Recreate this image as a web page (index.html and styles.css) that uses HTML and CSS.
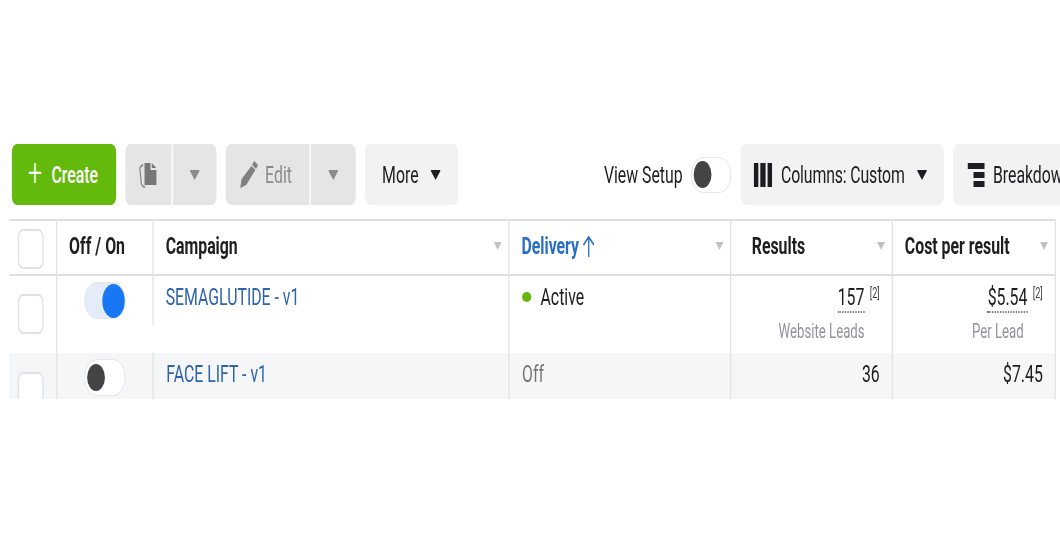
FILE: index.html

```html
<!DOCTYPE html>
<html lang="en">
<head>
  <meta charset="UTF-8">
  <title>Campaigns</title>
  <link rel="stylesheet" href="styles.css">
</head>
<body>

<div class="page">
  <div class="toolbar">
    <button class="btn create"><span class="plus">+</span> Create</button>
    <div class="group">
      <button class="btn off copy">
        <svg width="30" height="26" viewBox="0 0 30 26"><path d="M7 3 C3 4 2 5 2 7 L4 21 C5 24 7 25 10 25" fill="none" stroke="#8c8c8c" stroke-width="2"/><path d="M9 1 H18 V8 H27 V23 H9 Z M20 1 L27 6 H20 Z" fill="#777"/></svg>
      </button>
      <button class="btn off caret"><i class="arrow grey"></i></button>
    </div>
    <div class="group">
      <button class="btn off edit">
        <svg width="28" height="27" viewBox="0 0 28 27"><path d="M22 0 L28 4 L25 8 L19 4 Z M18 5 L24 9 L10 24 L1 27 L3 18 Z" fill="#808080"/></svg>
        Edit
      </button>
      <button class="btn off caret wide"><i class="arrow grey"></i></button>
    </div>
    <button class="btn more">More <i class="arrow"></i></button>
    <div class="view-setup">
      <span>View Setup</span>
      <span class="toggle"><i class="knob"></i></span>
    </div>
    <button class="btn columns">
      <svg width="28" height="24" viewBox="0 0 28 24"><path d="M0 0 H7 V24 H0 Z M10 0 H18 V24 H10 Z M21 0 H28 V24 H21 Z" fill="#1c1e21"/></svg>
      <span class="col-label">Columns: Custom</span> <i class="arrow"></i>
    </button>
    <button class="btn breakdown">
      <svg width="26" height="24" viewBox="0 0 26 24"><path d="M0 0 H26 V6 H0 Z M9 9 H26 V15 H9 Z M9 18 H26 V24 H9 Z" fill="#1c1e21"/></svg>
      Breakdown
    </button>
  </div>

  <div class="table-clip">
    <table class="campaigns">
      <colgroup>
        <col class="c-check"><col class="c-toggle"><col class="c-name"><col class="c-delivery"><col class="c-results"><col class="c-cost">
      </colgroup>
      <thead>
        <tr>
          <th><span class="check"></span></th>
          <th>Off / On</th>
          <th><div class="th-in">Campaign <i class="sort"></i></div></th>
          <th><div class="th-in"><span class="sorted">Delivery <svg class="up" width="18" height="22" viewBox="0 0 18 22"><path d="M9 22 V2 M1 10 L9 2 L17 10" fill="none" stroke="#2a6fc4" stroke-width="2"/></svg></span> <i class="sort"></i></div></th>
          <th class="th-results"><div class="th-in">Results <i class="sort"></i></div></th>
          <th><div class="th-in">Cost per result <i class="sort"></i></div></th>
        </tr>
      </thead>
      <tbody>
        <tr class="row-one">
          <td class="check-cell"><span class="check"></span></td>
          <td class="toggle-cell"><div class="toggle-in short"><span class="toggle on"><i class="knob"></i></span></div></td>
          <td><a class="link" href="#">SEMAGLUTIDE - v1</a></td>
          <td><span class="dot"></span>Active</td>
          <td class="num"><span class="dotted">157</span><sup>[2]</sup><div class="sub">Website Leads</div></td>
          <td class="num"><span class="dotted">$5.54</span><sup>[2]</sup><div class="sub">Per Lead</div></td>
        </tr>
        <tr class="row-two">
          <td class="check-cell"><span class="check"></span></td>
          <td class="toggle-cell"><div class="toggle-in"><span class="toggle"><i class="knob"></i></span></div></td>
          <td><a class="link" href="#">FACE LIFT - v1</a></td>
          <td class="muted">Off</td>
          <td class="num">36</td>
          <td class="num">$7.45</td>
        </tr>
      </tbody>
    </table>
  </div>
</div>

</body>
</html>
```

FILE: styles.css

```css
html, body { margin: 0; padding: 0; background: #fff; overflow: hidden; height: 100%; }
body { font-family: Roboto, "Liberation Sans", sans-serif; font-size: 24px; color: #1c1e21; }

/* the whole shot is squeezed sideways, so lay out wide and scale it */
.page { width: 1606px; padding-top: 144px; transform: scaleX(0.66); transform-origin: 0 0; filter: blur(0.6px); }

.toolbar { display: flex; align-items: center; gap: 14px; padding-left: 18px; height: 61px; white-space: nowrap; overflow: hidden; }
.btn { display: flex; align-items: center; justify-content: center; flex: none; height: 61px; padding: 0; border: 0; border-radius: 8px; background: #f2f2f2; font: inherit; color: #1c1e21; }
.create { width: 158px; gap: 14px; padding-right: 3px; background: #63b90c; color: #fff; font-weight: 500; }
.plus { font-size: 38px; font-weight: 300; line-height: 1; margin-top: -4px; }
.group { display: flex; gap: 2px; flex: none; }
.off { background: #e5e5e5; color: #8a8a8a; }
.group .btn:first-child { border-radius: 8px 0 0 8px; }
.group .btn:last-child { border-radius: 0 8px 8px 0; }
.copy { width: 70px; }
.caret { width: 66px; }
.caret.wide { width: 68px; }
.edit { width: 127px; gap: 11px; padding-right: 6px; }
.more { width: 141px; gap: 18px; }
.columns { width: 308px; gap: 13px; justify-content: flex-start; padding-left: 20px; }
.col-label { margin-right: 5px; letter-spacing: -0.2px; }
.breakdown { width: 300px; gap: 12px; justify-content: flex-start; padding-left: 22px; }

.arrow { display: inline-block; border: 8px solid transparent; border-top: 10px solid #1c1e21; border-bottom: 0; border-radius: 2px; }
.arrow.grey { border-top-color: #8a8a8a; }

.view-setup { display: flex; align-items: center; gap: 13px; margin-left: 207px; flex: none; }

.toggle { display: inline-flex; align-items: center; box-sizing: border-box; width: 61px; height: 36px; padding: 0 3px; border: 1px solid #dfe1e4; border-radius: 18px; background: #fff; }
.knob { display: block; width: 27px; height: 27px; border-radius: 50%; background: #444; }
.toggle.on { justify-content: flex-end; background: #e4ecf9; }
.toggle.on .knob { width: 34px; height: 34px; background: #1877f2; margin-right: -3px; }

.table-clip { margin: 14px 0 0 14px; height: 180px; overflow: hidden; }
.campaigns { width: 1585px; table-layout: fixed; border-collapse: collapse; }
.c-check { width: 72px; }
.c-toggle { width: 146px; }
.c-name { width: 539px; }
.c-delivery { width: 336px; }
.c-results { width: 245px; }
.c-cost { width: 247px; }

th, td { border-left: 2px solid #e2e3e5; padding: 0 18px 0 19px; vertical-align: top; text-align: left; }
th:last-child, td:last-child { border-right: 2px solid #e2e3e5; }
th:first-child, td:first-child { border-left: 0; padding: 0; }
th { box-sizing: border-box; height: 55px; padding: 0 10px 3px 18px; border-top: 2px solid #dddfe2; border-bottom: 2px solid #dddfe2; vertical-align: middle; font-weight: 700; }
th:nth-child(2) { text-align: center; padding: 0 24px 3px 0; }
.th-results .th-in { padding-left: 13px; }
.th-in { display: flex; align-items: center; justify-content: space-between; }
.sorted { color: #2a6fc4; }
.up { vertical-align: -3px; }
.sort { display: block; border: 6px solid transparent; border-top: 8px solid #bfc1c5; border-bottom: 0; }

.check { display: block; box-sizing: border-box; width: 39px; height: 40px; margin-left: 13px; border: 2px solid #dfe1e4; border-radius: 8px; background: #fff; }
th .check { margin-top: 3px; }
.row-one td { height: 78px; padding-top: 7px; box-sizing: border-box; line-height: 28px; }
.row-two td { height: 48px; padding-top: 7px; box-sizing: border-box; line-height: 28px; background: #f5f6f7; }
.row-one td.check-cell { padding: 18px 0 0 0; }
.row-two td.check-cell { padding: 19px 0 0 0; background: #f5f6f7; }
.row-one td.toggle-cell, .row-two td.toggle-cell { padding: 0; }
.row-one td:nth-child(3) { border-left: 0; }
.toggle-in { display: flex; justify-content: center; padding-top: 6px; }
.toggle-in.short { height: 43px; border-right: 2px solid #e2e3e5; margin-right: -1px; }
.row-one .toggle { width: 62px; height: 37px; }
.row-two .toggle { width: 62px; height: 37px; }

.link { color: #2f63ad; text-decoration: none; }
.dot { display: inline-block; width: 14px; height: 10px; margin-right: 14px; border-radius: 50%; background: #68b50e; vertical-align: 3px; }
.muted { color: #777; }
.num { text-align: right; }
.dotted { border-bottom: 2px dotted #777; }
sup { font-size: 14px; line-height: 0; margin-left: 8px; color: #444; vertical-align: 7px; }
.sub { margin: 6px 23px 0 0; font-size: 20px; color: #90949c; }
td:last-child .sub { margin-right: 29px; }
```
